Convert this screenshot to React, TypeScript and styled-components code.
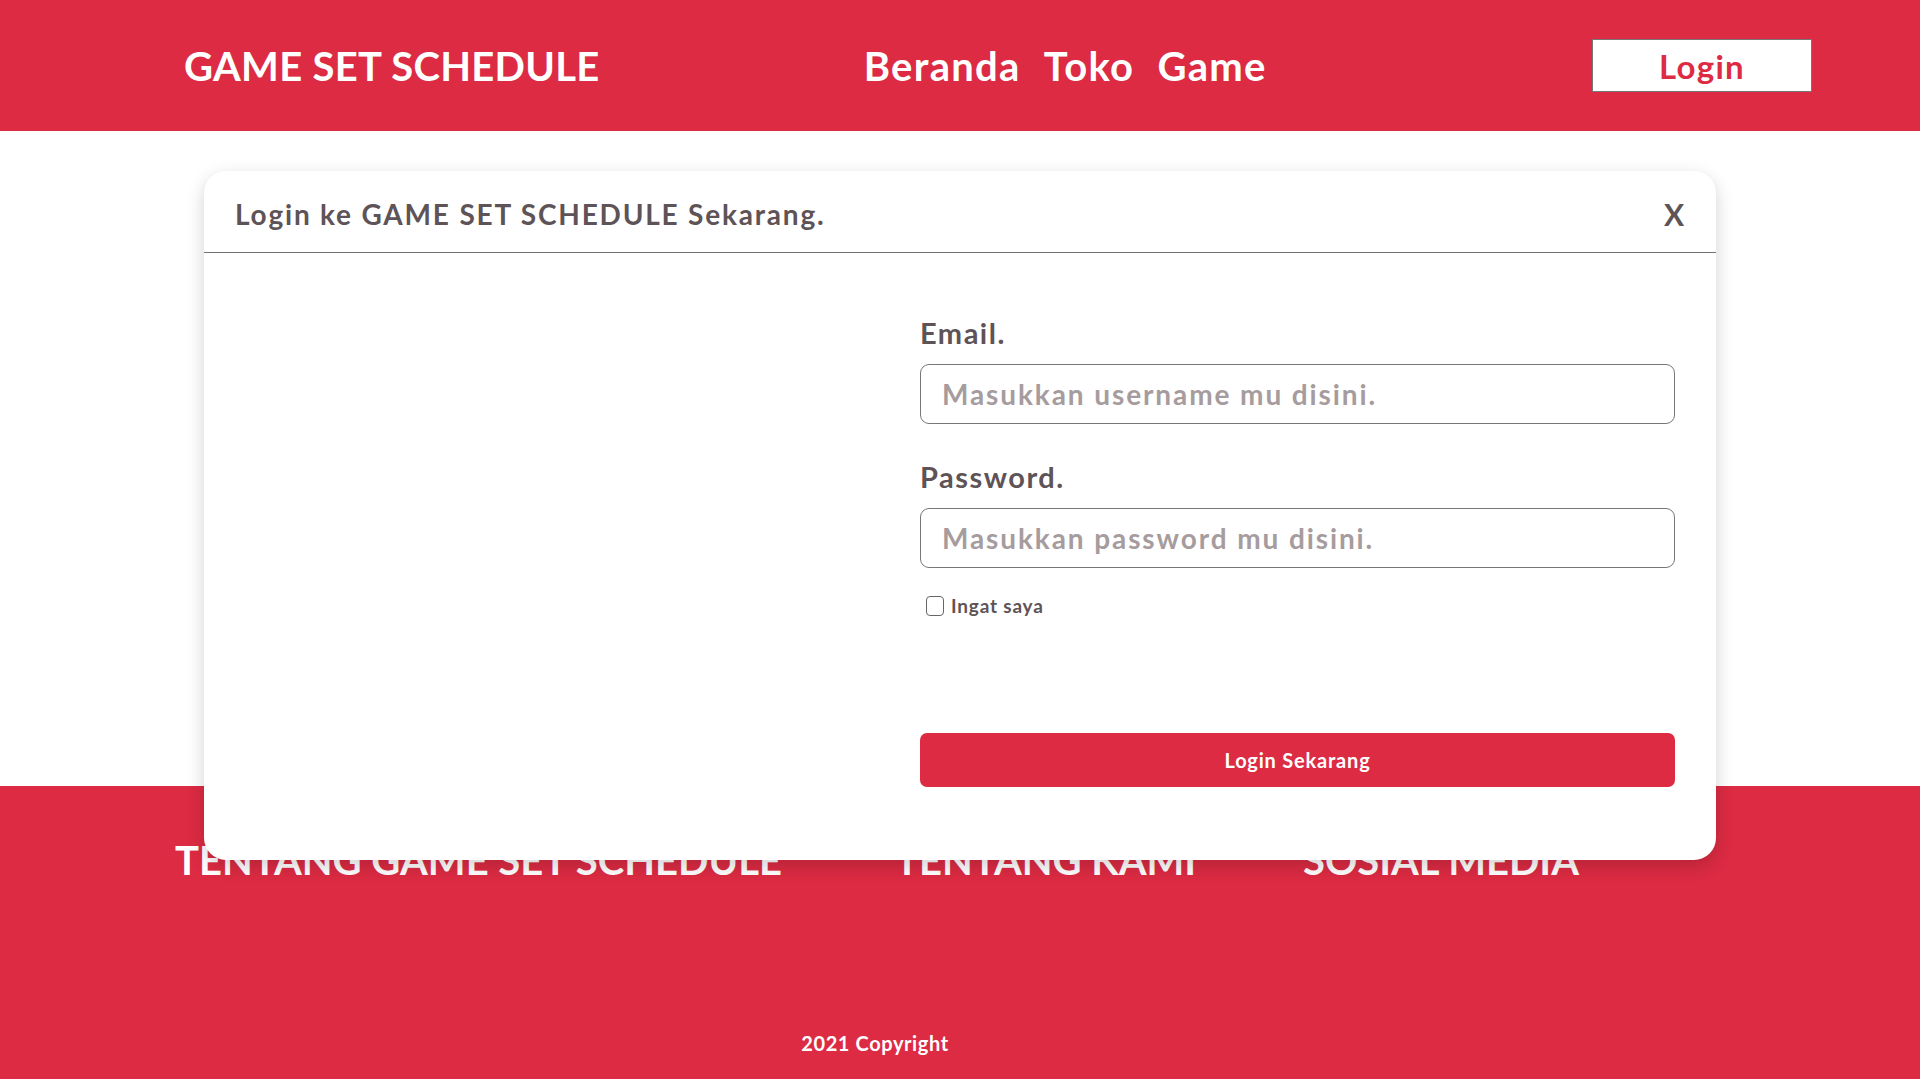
import React from "react";
import styled, { createGlobalStyle } from "styled-components";

const RED = "#dc2b43";
const INK = "#5e5356";

const GlobalStyle = createGlobalStyle`
  body {
    margin: 0;
    font-family: Lato, "Open Sans", sans-serif;
    background: #ffffff;
  }
  * {
    box-sizing: border-box;
  }
`;

const Page = styled.div`
  position: relative;
  width: 1920px;
  min-height: 1080px;
  overflow: hidden;
`;

// header

const Header = styled.header`
  height: 131px;
  background: ${RED};
  display: flex;
  align-items: center;
  padding: 0 108px 0 184px;
`;

const Brand = styled.div`
  color: #fff;
  font-size: 40px;
  font-weight: 700;
  letter-spacing: 0.3px;
  white-space: nowrap;
`;

const Nav = styled.nav`
  display: flex;
  gap: 23px;
  margin-left: 264px;
`;

const NavLink = styled.a`
  color: #fff;
  font-size: 40px;
  font-weight: 700;
  letter-spacing: 1.3px;
  text-decoration: none;
`;

const HeaderButton = styled.button`
  margin-left: auto;
  width: 220px;
  height: 53px;
  background: #fff;
  border: 1px solid #777;
  color: ${RED};
  font-family: inherit;
  font-size: 33px;
  font-weight: 700;
  letter-spacing: 1.3px;
  padding: 0;
`;

// content

const Main = styled.main`
  height: 655px;
  background: #fff;
`;

const Footer = styled.footer`
  background: ${RED};
  padding: 50px 0 24px;
  color: #fff;
`;

const FooterInner = styled.div`
  width: 1400px;
  margin-left: 175px;
`;

const FooterColumns = styled.div`
  display: grid;
  grid-template-columns: 720px 408px 1fr;
`;

const FooterTitle = styled.h3`
  margin: 0;
  font-size: 40px;
  font-weight: 700;
  text-transform: uppercase;
  line-height: 48px;
  white-space: nowrap;
`;

const Copyright = styled.p`
  margin: 147px 0 0;
  text-align: center;
  font-size: 20px;
  font-weight: 700;
  letter-spacing: 0.6px;
  line-height: 24px;
`;

// modal

const Modal = styled.div`
  position: absolute;
  top: 171px;
  left: 204px;
  width: 1512px;
  background: #fff;
  border-radius: 22px;
  box-shadow: 0 6px 18px rgba(0, 0, 0, 0.18);
`;

const ModalHeader = styled.div`
  height: 82px;
  display: flex;
  align-items: center;
  justify-content: space-between;
  padding: 4px 32px 0 31px;
  border-bottom: 1px solid #707070;
`;

const ModalTitle = styled.h2`
  margin: 0;
  font-size: 28px;
  font-weight: 700;
  letter-spacing: 1.8px;
  color: ${INK};
`;

const CloseButton = styled.button`
  background: none;
  border: none;
  padding: 0;
  font-family: inherit;
  font-size: 30px;
  font-weight: 700;
  color: ${INK};
`;

const ModalBody = styled.div`
  display: grid;
  grid-template-columns: 1fr 755px;
  padding: 64px 41px 73px;
`;

const Form = styled.form`
  grid-column: 2;
  display: flex;
  flex-direction: column;
`;

const Label = styled.label<{ gap?: number }>`
  margin-top: ${(p) => p.gap ?? 0}px;
  font-size: 29px;
  font-weight: 700;
  letter-spacing: 1.5px;
  color: ${INK};
  line-height: 32px;
`;

const Input = styled.input`
  margin-top: 15px;
  height: 60px;
  border: 1px solid #777;
  border-radius: 9px;
  padding: 0 21px;
  font-family: inherit;
  font-size: 28px;
  font-weight: 700;
  letter-spacing: 1.9px;
  color: ${INK};
  outline: none;

  &::placeholder {
    color: #a69c9e;
  }
`;

const CheckRow = styled.label`
  margin-top: 26px;
  display: flex;
  align-items: center;
  gap: 7px;
  padding-left: 6px;
  font-size: 19px;
  font-weight: 700;
  letter-spacing: 0.8px;
  color: ${INK};
`;

const Check = styled.input`
  appearance: none;
  margin: 0;
  width: 18px;
  height: 20px;
  border: 1.5px solid #666;
  border-radius: 4px;
  background: #fff;
`;

const SubmitButton = styled.button`
  margin-top: 116px;
  height: 54px;
  border: none;
  border-radius: 7px;
  background: ${RED};
  color: #fff;
  font-family: inherit;
  font-size: 20px;
  font-weight: 700;
  letter-spacing: 0.8px;
`;

const App = () => {
  return (
    <Page>
      <GlobalStyle />
      <Header>
        <Brand>GAME SET SCHEDULE</Brand>
        <Nav>
          <NavLink href="#">Beranda</NavLink>
          <NavLink href="#">Toko</NavLink>
          <NavLink href="#">Game</NavLink>
        </Nav>
        <HeaderButton>Login</HeaderButton>
      </Header>

      <Main />

      <Footer>
        <FooterInner>
          <FooterColumns>
            <FooterTitle>Tentang Game Set Schedule</FooterTitle>
            <FooterTitle>Tentang Kami</FooterTitle>
            <FooterTitle>Sosial Media</FooterTitle>
          </FooterColumns>
          <Copyright>2021 Copyright</Copyright>
        </FooterInner>
      </Footer>

      <Modal>
        <ModalHeader>
          <ModalTitle>Login ke GAME SET SCHEDULE Sekarang.</ModalTitle>
          <CloseButton>X</CloseButton>
        </ModalHeader>
        <ModalBody>
          <Form onSubmit={(e) => e.preventDefault()}>
            <Label>Email.</Label>
            <Input type="email" placeholder="Masukkan username mu disini." />
            <Label gap={37}>Password.</Label>
            <Input type="password" placeholder="Masukkan password mu disini." />
            <CheckRow>
              <Check type="checkbox" />
              Ingat saya
            </CheckRow>
            <SubmitButton type="submit">Login Sekarang</SubmitButton>
          </Form>
        </ModalBody>
      </Modal>
    </Page>
  );
};

export default App;
